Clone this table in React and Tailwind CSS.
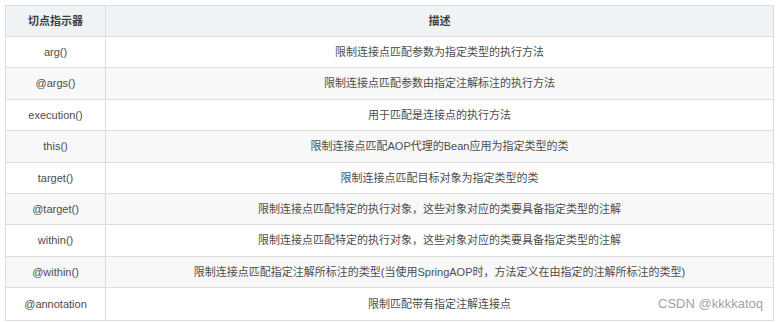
import React from 'react';

const rows = [
    { name: 'arg()', desc: '限制连接点匹配参数为指定类型的执行方法' },
    { name: '@args()', desc: '限制连接点匹配参数由指定注解标注的执行方法' },
    { name: 'execution()', desc: '用于匹配是连接点的执行方法' },
    { name: 'this()', desc: '限制连接点匹配AOP代理的Bean应用为指定类型的类' },
    { name: 'target()', desc: '限制连接点匹配目标对象为指定类型的类' },
    { name: '@target()', desc: '限制连接点匹配特定的执行对象，这些对象对应的类要具备指定类型的注解' },
    { name: 'within()', desc: '限制连接点匹配特定的执行对象，这些对象对应的类要具备指定类型的注解' },
    { name: '@within()', desc: '限制连接点匹配指定注解所标注的类型(当使用SpringAOP时，方法定义在由指定的注解所标注的类型)' },
    { name: '@annotation', desc: '限制匹配带有指定注解连接点' },
];

const App = () => {
    return (
        <div
            className="relative w-[779px] h-[322px] bg-white pl-[5px] pt-[5px] text-[11px] text-[#4d4d4d]"
            style={{ fontFamily: '"Liberation Sans", "Noto Sans CJK SC", sans-serif' }}
        >
            <div className="w-[769px] border border-[#dddddd]">
                {/* header */}
                <div className="flex h-[31px] bg-[#eff3f5] border-b border-[#dddddd] font-bold text-[#3f3f3f]">
                    <div className="w-[100px] shrink-0 flex items-center justify-center border-r border-[#dddddd]">切点指示器</div>
                    <div className="flex-1 flex items-center justify-center">描述</div>
                </div>
                {rows.map((row, i) => (
                    <div
                        key={row.name}
                        className={`flex h-[31.4px] ${i < rows.length - 1 ? 'border-b border-[#dddddd]' : ''} ${i % 2 === 1 ? 'bg-[#f8f8f8]' : 'bg-white'}`}
                    >
                        <div className="w-[100px] shrink-0 flex items-center justify-center border-r border-[#dddddd]">{row.name}</div>
                        <div className="flex-1 flex items-center justify-center">{row.desc}</div>
                    </div>
                ))}
            </div>
            {/* watermark */}
            <div className="absolute right-[16px] top-[296px] text-[13px] text-[#a3a3a3] leading-[15px]">CSDN @kkkkatoq</div>
        </div>
    );
};

export default App;
